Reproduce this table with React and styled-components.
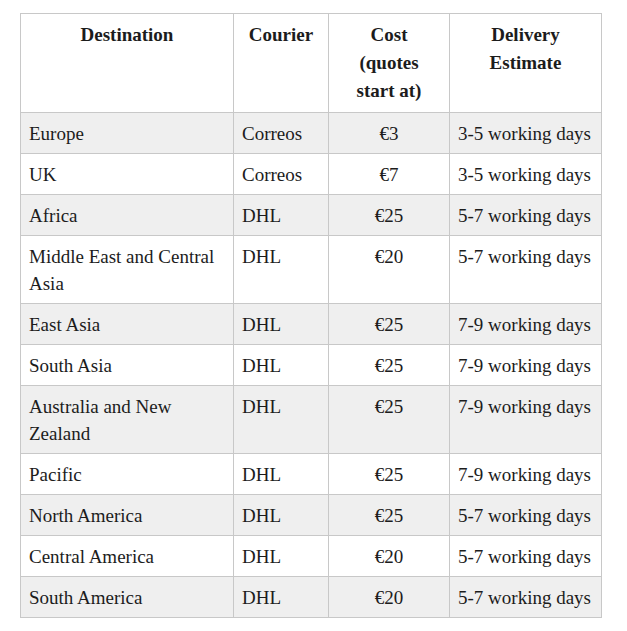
import React from "react";
import styled, { createGlobalStyle } from "styled-components";

const GlobalStyle = createGlobalStyle`
  body {
    margin: 0;
    background: #ffffff;
    font-family: "Liberation Serif", "DejaVu Serif", serif;
    color: #1c1c1c;
  }
`;

const Page = styled.div`
  padding: 13px 0 0 20px;
`;

const Table = styled.table`
  border-collapse: collapse;
  table-layout: fixed;
  width: 581px;
  font-family: "Liberation Serif", "DejaVu Serif", serif;
  font-size: 19px;
  color: #1c1c1c;
`;

const HeadCell = styled.th`
  border: 1px solid #c8c8c8;
  padding: 7px 8px 7px;
  line-height: 28px;
  font-weight: bold;
  text-align: center;
  vertical-align: top;
`;

const Row = styled.tr`
  background: ${({ $shaded }) => ($shaded ? "#efefef" : "#ffffff")};
`;

const Cell = styled.td`
  border: 1px solid #c8c8c8;
  padding: 7px 8px 6px;
  line-height: 27px;
  vertical-align: top;
  text-align: ${({ $center }) => ($center ? "center" : "left")};
`;

const rates = [
  ["Europe", "Correos", "€3", "3-5 working days"],
  ["UK", "Correos", "€7", "3-5 working days"],
  ["Africa", "DHL", "€25", "5-7 working days"],
  ["Middle East and Central Asia", "DHL", "€20", "5-7 working days"],
  ["East Asia", "DHL", "€25", "7-9 working days"],
  ["South Asia", "DHL", "€25", "7-9 working days"],
  ["Australia and New Zealand", "DHL", "€25", "7-9 working days"],
  ["Pacific", "DHL", "€25", "7-9 working days"],
  ["North America", "DHL", "€25", "5-7 working days"],
  ["Central America", "DHL", "€20", "5-7 working days"],
  ["South America", "DHL", "€20", "5-7 working days"],
];

const App = () => {
  return (
    <>
      <GlobalStyle />
      <Page>
        <Table>
          <colgroup>
            <col style={{ width: 213 }} />
            <col style={{ width: 95 }} />
            <col style={{ width: 121 }} />
            <col style={{ width: 152 }} />
          </colgroup>
          <thead>
            <tr>
              <HeadCell>Destination</HeadCell>
              <HeadCell>Courier</HeadCell>
              <HeadCell>
                Cost
                <br />
                (quotes
                <br />
                start at)
              </HeadCell>
              <HeadCell>Delivery Estimate</HeadCell>
            </tr>
          </thead>
          <tbody>
            {rates.map((r, i) => (
              <Row key={r[0]} $shaded={i % 2 === 0}>
                <Cell>{r[0]}</Cell>
                <Cell>{r[1]}</Cell>
                <Cell $center>{r[2]}</Cell>
                <Cell>{r[3]}</Cell>
              </Row>
            ))}
          </tbody>
        </Table>
      </Page>
    </>
  );
};

export default App;
